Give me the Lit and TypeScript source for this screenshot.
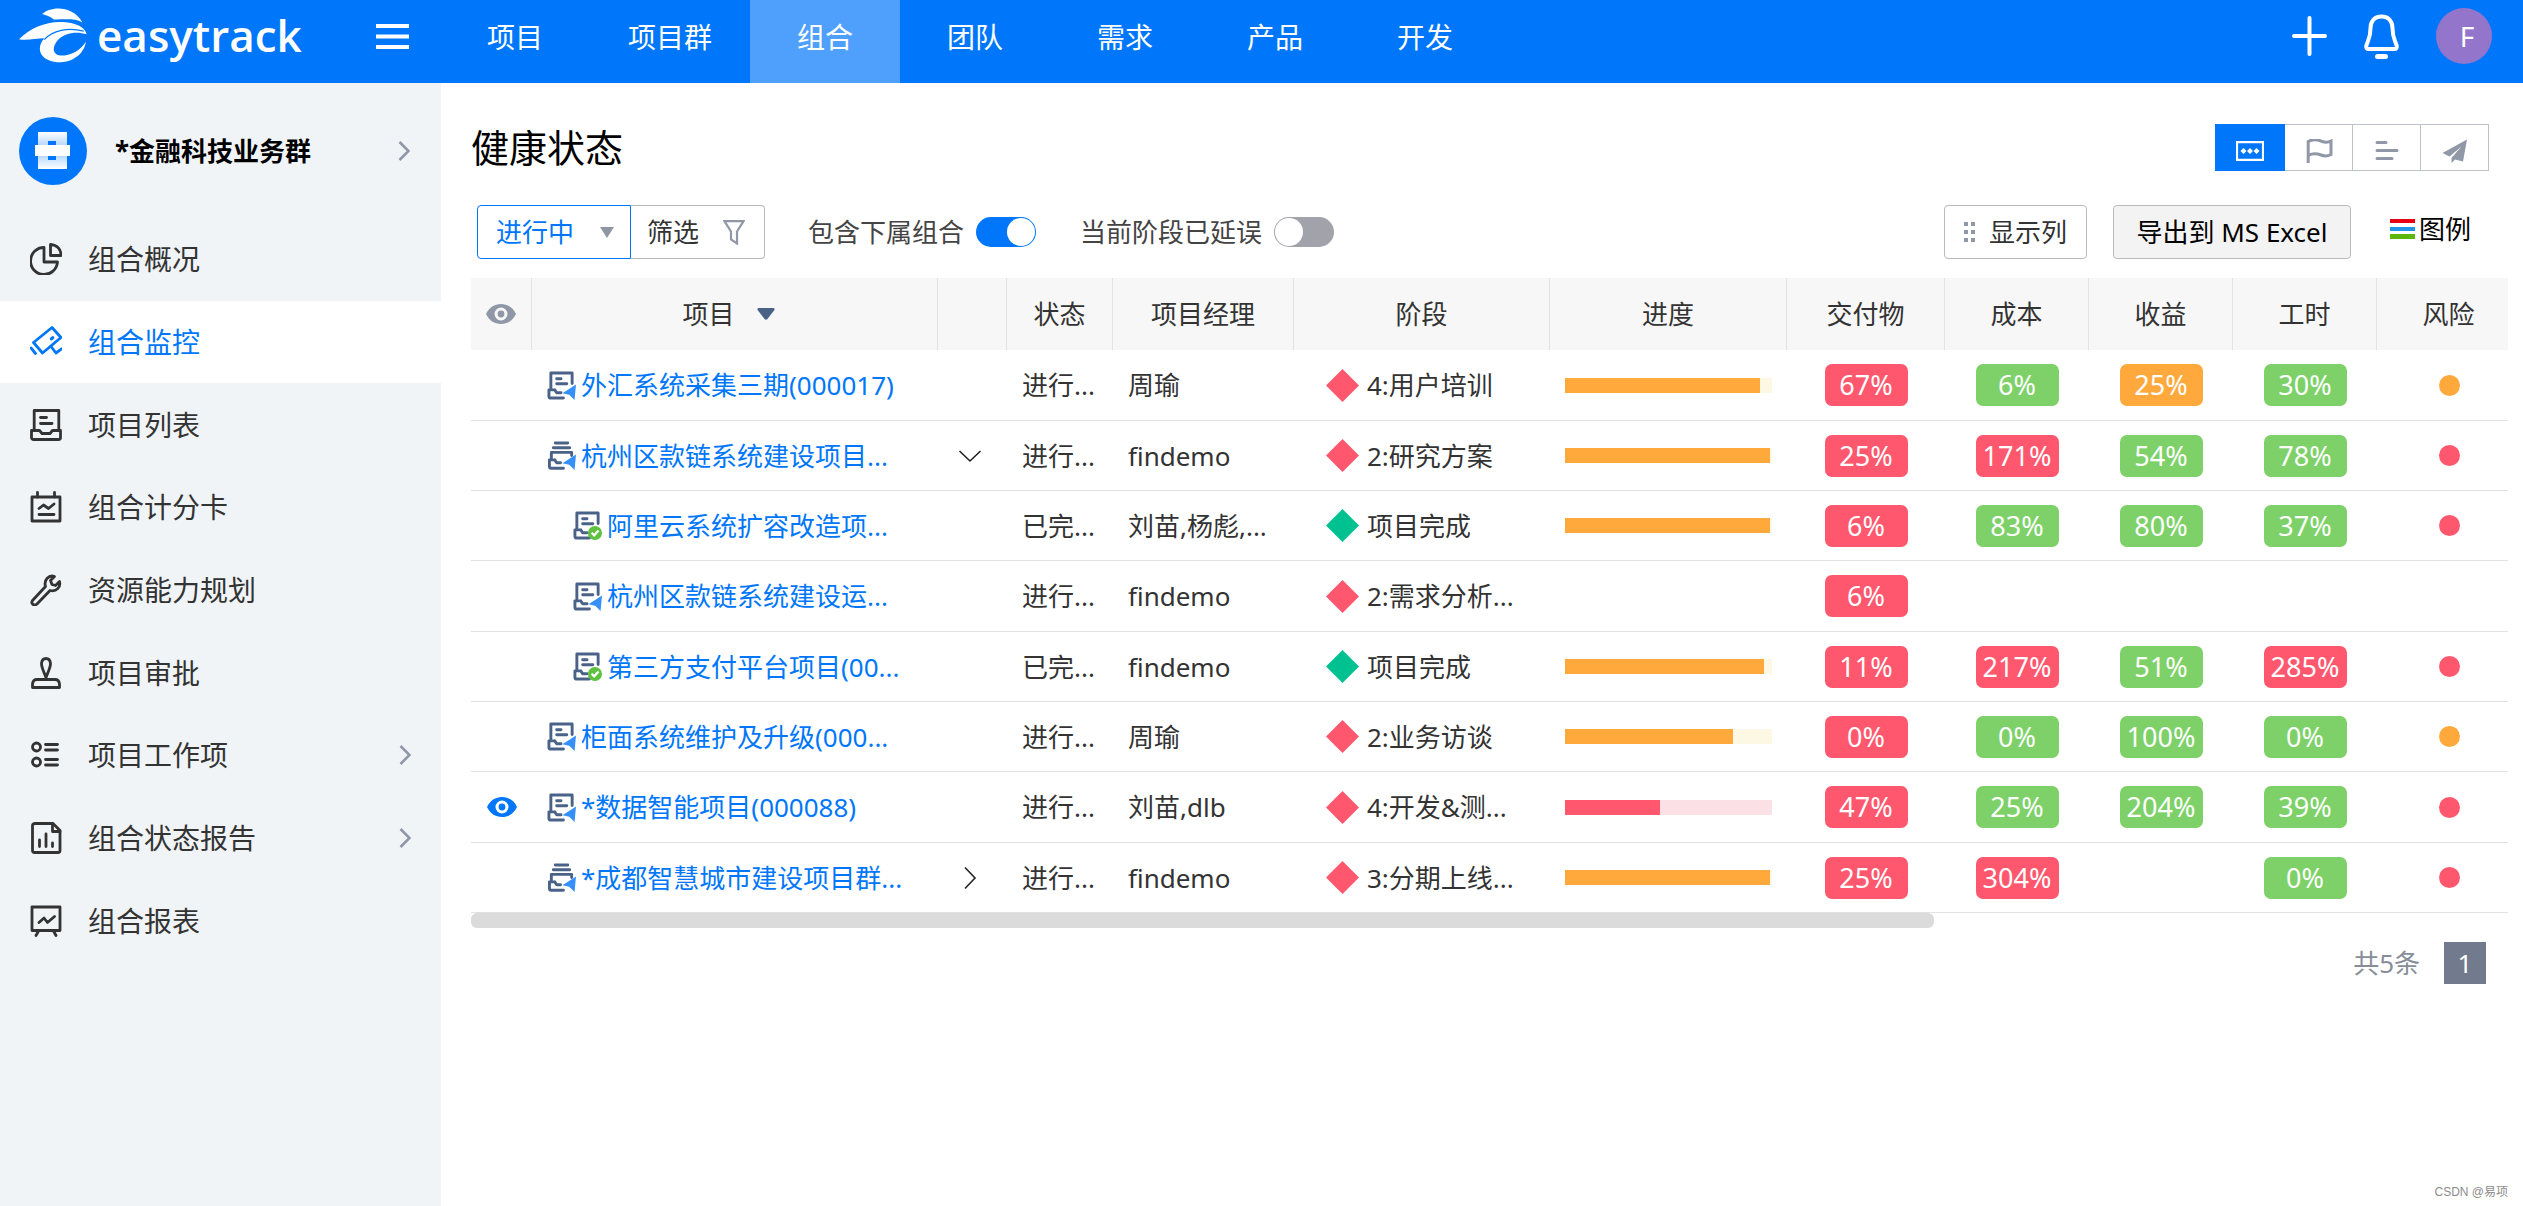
import { LitElement, html, css, svg, nothing } from "lit";
import { customElement, property, state } from "lit/decorators.js";
import { classMap } from "lit/directives/class-map.js";

type Tone = "red" | "green" | "amber";
type Badge = [string, Tone] | null;

interface ProjectRow {
  watched?: boolean;
  icon: "project" | "group";
  done?: boolean;
  child?: boolean;
  name: string;
  expander?: "open" | "closed";
  status: string;
  manager: string;
  stage: string;
  stageDone?: boolean;
  progress?: { value: number; tone: Tone };
  badges: [Badge, Badge, Badge, Badge];
  risk?: Tone;
}

const ROWS: ProjectRow[] = [
  {
    icon: "project", name: "外汇系统采集三期(000017)", status: "进行...", manager: "周瑜",
    stage: "4:用户培训", progress: { value: 94, tone: "amber" },
    badges: [["67%", "red"], ["6%", "green"], ["25%", "amber"], ["30%", "green"]], risk: "amber",
  },
  {
    icon: "group", name: "杭州区款链系统建设项目...", expander: "open", status: "进行...", manager: "findemo",
    stage: "2:研究方案", progress: { value: 99, tone: "amber" },
    badges: [["25%", "red"], ["171%", "red"], ["54%", "green"], ["78%", "green"]], risk: "red",
  },
  {
    icon: "project", done: true, child: true, name: "阿里云系统扩容改造项...", status: "已完...", manager: "刘苗,杨彪,...",
    stage: "项目完成", stageDone: true, progress: { value: 99, tone: "amber" },
    badges: [["6%", "red"], ["83%", "green"], ["80%", "green"], ["37%", "green"]], risk: "red",
  },
  {
    icon: "project", child: true, name: "杭州区款链系统建设运...", status: "进行...", manager: "findemo",
    stage: "2:需求分析...",
    badges: [["6%", "red"], null, null, null],
  },
  {
    icon: "project", done: true, child: true, name: "第三方支付平台项目(00...", status: "已完...", manager: "findemo",
    stage: "项目完成", stageDone: true, progress: { value: 96, tone: "amber" },
    badges: [["11%", "red"], ["217%", "red"], ["51%", "green"], ["285%", "red"]], risk: "red",
  },
  {
    icon: "project", name: "柜面系统维护及升级(000...", status: "进行...", manager: "周瑜",
    stage: "2:业务访谈", progress: { value: 81, tone: "amber" },
    badges: [["0%", "red"], ["0%", "green"], ["100%", "green"], ["0%", "green"]], risk: "amber",
  },
  {
    watched: true, icon: "project", name: "*数据智能项目(000088)", status: "进行...", manager: "刘苗,dlb",
    stage: "4:开发&测...", progress: { value: 46, tone: "red" },
    badges: [["47%", "red"], ["25%", "green"], ["204%", "green"], ["39%", "green"]], risk: "red",
  },
  {
    icon: "group", name: "*成都智慧城市建设项目群...", expander: "closed", status: "进行...", manager: "findemo",
    stage: "3:分期上线...", progress: { value: 99, tone: "amber" },
    badges: [["25%", "red"], ["304%", "red"], null, ["0%", "green"]], risk: "red",
  },
];

/* Sidebar glyphs, drawn on a 32 x 32 grid. */
const SIDE_ICONS = {
  pie: svg`<path d="M14 4.5A13.500 13.500 0 1 0 27.500 19H14Z"/><path d="M20.500 1.500V12.500H31C31 6 27 2 20.500 1.500Z"/>`,
  camera: svg`<path d="M3.500 16.500 22 1.500 31 11.500 12.500 27Z"/><path d="M21.500 12.800l1.200-1" stroke-width="3.400"/><path d="M1 22l4.500 5.500M21 20.500l5 6.500 5.500-4"/>`,
  inbox: svg`<path d="M4.200 20V1.500H28.800V20"/><path d="M1.500 21.500H9.500L12 24.500H20L22.500 21.500H30.500V28.500Q30.500 30.500 28.500 30.500H3.700Q1.500 30.500 1.500 28.500Z"/><path d="M10.500 8.500h6M10.500 14.500h11.500"/>`,
  score: svg`<path d="M2 6H30V30H2Z"/><path d="M7.500 1.500V6M24.500 1.500V6M9 17.500l4.500-3.500 5 3.500 5.500-4.500M9 23.500h15"/>`,
  wrench: svg`<path d="M29.500 7.500C31 13 26.500 18 20 16.500L7 30C4 32.500 0.500 29.500 2.500 26.500L15.500 12.500C13.500 6 19 0.500 24.500 2.500L20.500 6.500 22 10.500 25.500 11.500Z"/>`,
  stamp: svg`<path d="M16 20.500C14.500 16 11.500 11 11.500 6.500Q12 1.500 16 1.500Q20 1.500 20.500 6.500C20.500 11 17.500 16 16 20.500Z"/><path d="M2.500 30.500V27Q3 22.500 7 22.500H25Q29 22.500 29.500 27V30.500Z"/>`,
  list: svg`<circle cx="6.500" cy="8" r="4"/><circle cx="6.500" cy="23" r="4"/><path d="M15.500 5.500h12M15.500 11h12M15.500 20.500h12M15.500 26h12"/>`,
  report: svg`<path d="M5 1.500H23L30 8.500V28.500Q30 30.500 28 30.500H4.500Q2.500 30.500 2.500 28.500V3.500Q2.500 1.500 5 1.500Z"/><path d="M22.500 2V9.500H30M9.500 18v6.500M16 12v12.500M22.500 21v3.500"/>`,
  board: svg`<path d="M2 2H30V25.500H2Z"/><path d="M8.500 26l-2.500 4.500M23.500 26l2.500 4.500M9 17.500l5-4.500 3.500 4.500 7-6"/>`,
};

const MENU: { icon: keyof typeof SIDE_ICONS; label: string; more?: boolean; active?: boolean }[] = [
  { icon: "pie", label: "组合概况" },
  { icon: "camera", label: "组合监控", active: true },
  { icon: "inbox", label: "项目列表" },
  { icon: "score", label: "组合计分卡" },
  { icon: "wrench", label: "资源能力规划" },
  { icon: "stamp", label: "项目审批" },
  { icon: "list", label: "项目工作项", more: true },
  { icon: "report", label: "组合状态报告", more: true },
  { icon: "board", label: "组合报表" },
];

const chevronRight = html`<svg class="chev" viewBox="0 0 12 22" width="12" height="22" aria-hidden="true">
  <path d="M1.500 2 10.500 11 1.500 20" fill="none" stroke="#9196a8" stroke-width="2.600"/></svg>`;

const eye = html`<svg class="eye" viewBox="0 0 30 20" width="30" height="20" aria-hidden="true">
  <path fill="currentColor" fill-rule="evenodd" d="M0 10C3 3.500 8.500 0 15 0S27 3.500 30 10C27 16.500 21.500 20 15 20S3 16.500 0 10ZM15 3.500A6.500 6.500 0 1 0 15 16.500 6.500 6.500 0 1 0 15 3.500Z"/>
  <circle cx="15" cy="10" r="3.400" fill="currentColor"/></svg>`;

const resetStyles = css`
  *, *::before, *::after { box-sizing: border-box; }
  a { color: inherit; text-decoration: none; }
  button, select, input {
    margin: 0; padding: 0; border: 0; background: none;
    font: inherit; color: inherit; appearance: none; cursor: pointer;
  }
  svg { display: block; flex: none; }
`;

@customElement("top-bar")
class TopBar extends LitElement {
  static styles = [resetStyles, css`
    :host { display: flex; height: 83px; background: #0077fa; color: #fff; }
    .brand { display: flex; justify-content: space-between; flex: none; width: 440px; padding: 8px 31px 0 19px; }
    .logo { display: flex; gap: 10px; align-items: flex-start; }
    .word { font-size: 44px; font-weight: 600; line-height: 55px; font-family: "Open Sans", "Noto Sans", sans-serif; }
    .burger { height: 57px; }
    .nav { display: flex; flex: 1; }
    .nav a {
      min-width: 150px; padding: 0 38px 8px; text-align: center; font-size: 28px; line-height: 75px;
    }
    .nav a.active { background: #4f9ffc; }
    .tools { display: flex; align-items: center; padding: 0 31px 11px 0; }
    .plus { margin-right: 37px; }
    .bell { margin-right: 37px; }
    .avatar {
      width: 56px; height: 56px; border-radius: 50%; background: #9475cc;
      font-size: 28px; line-height: 56px; text-align: center; padding-left: 6px;
    }
  `];

  private items = ["项目", "项目群", "组合", "团队", "需求", "产品", "开发"];

  render() {
    return html`
      <div class="brand">
        <a class="logo" href="#home">
          <svg viewBox="57 25 205 165" width="68" height="55" aria-hidden="true">
            <path fill="#fff" d="M127 43C150 20 218 14 248 68C225 54 190 60 162 59C152 50 138 47 127 43Z"/>
            <path fill="#fff" d="M57 119C92 84 140 64 190 67C230 70 256 82 261 104C230 94 195 100 175 120C155 142 158 165 182 168C215 168 242 152 259 126C252 166 215 190 172 188C122 184 106 148 133 116C108 116 80 124 57 119Z"/>
            <path fill="none" stroke="#0077fa" stroke-width="4" d="M133 120C158 92 205 82 252 94"/>
          </svg>
          <span class="word">easytrack</span>
        </a>
        <button class="burger" aria-label="菜单">
          <svg viewBox="0 0 33 25" width="33" height="25"><path d="M0 2H33M0 12.500H33M0 23H33" stroke="#fff" stroke-width="4"/></svg>
        </button>
      </div>
      <nav class="nav">
        ${this.items.map((t) => html`<a href="#nav" class=${classMap({ active: t === "组合" })}>${t}</a>`)}
      </nav>
      <div class="tools">
        <button class="plus" aria-label="新建">
          <svg viewBox="0 0 35 42" width="35" height="42"><path d="M2 21H33M17.500 3V39" stroke="#fff" stroke-width="4" stroke-linecap="round"/></svg>
        </button>
        <button class="bell" aria-label="通知">
          <svg viewBox="0 0 35 46" width="35" height="46" fill="none" stroke="#fff">
            <path d="M17.500 3.500C10 3.500 6.500 9 6.500 15C6.500 25 4 27 2.200 33Q2 36 4.500 36H30.500Q33 36 32.800 33C31 27 28.500 25 28.500 15C28.500 9 25 3.500 17.500 3.500Z" stroke-width="4"/>
            <path d="M13.500 43.500H21.500" stroke-width="5" stroke-linecap="round"/>
          </svg>
        </button>
        <button class="avatar">F</button>
      </div>`;
  }
}

@customElement("side-bar")
class SideBar extends LitElement {
  static styles = [resetStyles, css`
    :host { display: block; background: #f0f4f7; color: #333; }
    .profile { display: flex; align-items: center; height: 135px; padding: 0 31px 0 19px; color: #000; }
    .emblem { margin-right: 28px; }
    .title { flex: 1; font-size: 26px; font-weight: 700; line-height: 36px; }
    .menu { display: grid; grid-auto-rows: 1fr; height: 744px; }
    .item { display: flex; align-items: center; padding: 0 30px; font-size: 28px; line-height: 40px; }
    .item.active { background: #fff; color: #0077fa; }
    .glyph {
      margin-right: 26px; fill: none; stroke: currentColor; stroke-width: 2.800;
      stroke-linecap: round; stroke-linejoin: round;
    }
    .label { flex: 1; }
  `];

  render() {
    return html`
      <a class="profile" href="#portfolio">
        <svg class="emblem" viewBox="0 0 68 68" width="68" height="68" aria-hidden="true">
          <defs>
            <linearGradient id="up" x1="0" y1="0" x2="0" y2="1"><stop offset="0" stop-color="#fff"/><stop offset="1" stop-color="#b3d6fe"/></linearGradient>
            <linearGradient id="down" x1="0" y1="0" x2="0" y2="1"><stop offset="0" stop-color="#b3d6fe"/><stop offset="1" stop-color="#fff"/></linearGradient>
          </defs>
          <circle cx="34" cy="34" r="34" fill="#0077fa"/>
          <path fill="url(#up)" d="M19 15H48V29H37V24H29V29H19Z"/>
          <path fill="url(#down)" d="M19 38H29V43H37V38H48V52H19Z"/>
          <path fill="#fff" d="M16 28H51V39H16Z"/>
        </svg>
        <span class="title">*金融科技业务群</span>
        ${chevronRight}
      </a>
      <nav class="menu">
        ${MENU.map((m) => html`
          <a href="#menu" class=${classMap({ item: true, active: !!m.active })}>
            <svg class="glyph" viewBox="0 0 32 32" width="32" height="32" aria-hidden="true">${SIDE_ICONS[m.icon]}</svg>
            <span class="label">${m.label}</span>
            ${m.more ? chevronRight : nothing}
          </a>`)}
      </nav>`;
  }
}

@customElement("health-table")
class HealthTable extends LitElement {
  static styles = [resetStyles, css`
    :host { display: block; }
    .clip { overflow: hidden; }
    table { width: calc(100% + 13px); table-layout: fixed; border-collapse: separate; border-spacing: 0; }
    .c-eye { width: 61px; }
    .c-exp { width: 69px; }
    .c-status { width: 106px; }
    .c-manager { width: 181px; }
    .c-stage { width: 256px; }
    .c-progress { width: 237px; }
    .c-deliver { width: 158px; }
    .c-metric { width: 144px; }
    th, td { padding: 0 15px; font-size: 26px; line-height: 36px; white-space: nowrap; color: #333; }
    th { height: 72px; background: #f7f7f7; border-right: 1px solid #e2e2e2; font-weight: 400; text-align: center; }
    td { height: 70px; border-bottom: 1px solid #e2e2e2; text-align: left; }
    tr:nth-child(3n + 1) td { height: 71px; }
    .center { text-align: center; }
    .eye { margin: 0 auto; }
    th .eye { color: #9097a7; }
    td .eye { color: #0077fa; }
    .eye-cell { padding: 0; }
    .sort { display: inline-flex; align-items: center; gap: 22px; padding-right: 12px; }
    .name { display: flex; align-items: center; gap: 5px; color: #0077fa; }
    .name.child { padding-left: 26px; }
    .expand { display: block; margin: 0 auto; padding-right: 5px; }
    .stage { display: flex; align-items: center; gap: 8px; padding-left: 17px; }
    .track { height: 15px; width: 207px; max-width: 100%; }
    .track.amber { background: #fcf8e4; }
    .track.red { background: #fbe0e5; }
    .fill { height: 100%; }
    .red .fill, .dot.red, .badge.red { background: #ff586e; }
    .amber .fill, .dot.amber, .badge.amber { background: #ffa93d; }
    .green .fill, .dot.green, .badge.green { background: #7dd168; }
    .badge { display: inline-block; width: 83px; height: 42px; border-radius: 7px; color: #fff; font-size: 27px; line-height: 42px; text-align: center; vertical-align: middle; }
    .dot { display: block; width: 21px; height: 21px; margin: 0 auto; border-radius: 50%; }
    .metric { padding: 0; text-align: center; }
    .thumb { width: 71.8%; height: 15px; border-radius: 6px; background: #dbdbdb; }
  `];

  private rowIcon(r: ProjectRow) {
    return html`<svg viewBox="0 0 30 30" width="29" height="29" aria-hidden="true">
      <g fill="none" stroke="#4a6288" stroke-width="3" stroke-linecap="round" stroke-linejoin="round">
        ${r.icon === "project"
          ? svg`<path d="M4 18V2H26V13M10 8H14.500M10 13.200H20.500"/>
                <path d="M8 19.500H2V26Q2 28 4 28H17M8 19.500L10 22.500H14.500"/>`
          : svg`<path d="M8.500 2H21.500M6.500 7H23.500M4.500 18V11.800H25.500V15"/>
                <path d="M8 19.500H2.500V26Q2.500 28.200 4.500 28.200H17M8 19.500L10 22.500H14"/>`}
      </g>
      ${r.done
        ? svg`<circle cx="22.700" cy="22.700" r="7.300" fill="#5ec23f"/><path d="M19.200 22.500l2.700 2.700 4.500-5" fill="none" stroke="#fff" stroke-width="2.400"/>`
        : svg`<path d="M30 14 16 23 23 24.500 28.500 30Z" fill="#3590fb"/>`}
    </svg>`;
  }

  private badge(b: Badge) {
    return html`<td class="metric">${b ? html`<span class="badge ${b[1]}">${b[0]}</span>` : nothing}</td>`;
  }

  render() {
    return html`
      <div class="clip">
        <table>
          <colgroup>
            <col class="c-eye"><col><col class="c-exp"><col class="c-status"><col class="c-manager">
            <col class="c-stage"><col class="c-progress"><col class="c-deliver">
            <col class="c-metric"><col class="c-metric"><col class="c-metric"><col class="c-metric">
          </colgroup>
          <thead>
            <tr>
              <th class="eye-cell" aria-label="关注">${eye}</th>
              <th><button class="sort">项目
                <svg viewBox="0 0 18 12" width="18" height="12" aria-hidden="true"><path d="M1.500 0H16.500Q18.500 0.500 17 2.500L10.500 11Q9 12.500 7.500 11L1 2.500Q-.5 0.500 1.500 0Z" fill="#4a6288"/></svg>
              </button></th>
              <th aria-label="展开"></th>
              ${["状态", "项目经理", "阶段", "进度", "交付物", "成本", "收益", "工时", "风险"].map((t) => html`<th>${t}</th>`)}
            </tr>
          </thead>
          <tbody>
            ${ROWS.map((r) => html`
              <tr>
                <td class="eye-cell">${r.watched ? eye : nothing}</td>
                <td><a class=${classMap({ name: true, child: !!r.child })} href="#project">${this.rowIcon(r)}<span>${r.name}</span></a></td>
                <td class="metric">${r.expander ? html`
                  <button class="expand" aria-label=${r.expander === "open" ? "收起" : "展开"}>
                    <svg viewBox="0 0 24 24" width="24" height="24"><path fill="none" stroke="#222" stroke-width="1.600"
                      d=${r.expander === "open" ? "M1.500 7 12 17 22.500 7" : "M7 1.500 17 12 7 22.500"}/></svg>
                  </button>` : nothing}</td>
                <td>${r.status}</td>
                <td>${r.manager}</td>
                <td><div class="stage">
                  <svg viewBox="0 0 33 33" width="33" height="33" aria-hidden="true"><path d="M16.500 0 33 16.500 16.500 33 0 16.500Z" fill=${r.stageDone ? "#00c190" : "#ff586e"}/></svg>
                  <span>${r.stage}</span></div></td>
                <td>${r.progress ? html`
                  <div class="track ${r.progress.tone}" role="progressbar" aria-valuenow=${r.progress.value}>
                    <div class="fill" style="width:${r.progress.value}%"></div>
                  </div>` : nothing}</td>
                ${r.badges.map((b) => this.badge(b))}
                <td class="metric">${r.risk ? html`<span class="dot ${r.risk}"></span>` : nothing}</td>
              </tr>`)}
          </tbody>
        </table>
      </div>
      <div class="thumb"></div>`;
  }
}

@customElement("switch-field")
class SwitchField extends LitElement {
  static styles = [resetStyles, css`
    label { display: flex; align-items: center; gap: 12px; color: #444; cursor: pointer; }
    input { width: 60px; height: 30px; padding: 1px; border-radius: 15px; background: #a2a2ab; display: flex; }
    input::before { content: ""; width: 28px; height: 28px; border-radius: 50%; background: #fff; }
    input:checked { background: #0077fa; justify-content: flex-end; }
  `];
  @property() label = "";
  @property({ type: Boolean }) checked = false;

  render() {
    return html`<label><span>${this.label}</span><input type="checkbox" role="switch" .checked=${this.checked}></label>`;
  }
}

@customElement("app-root")
class AppRoot extends LitElement {
  static styles = [resetStyles, css`
    :host {
      display: grid; grid-template: auto 1fr / 441px minmax(0, 1fr);
      min-height: 100vh; background: #fff; color: #333;
      font-family: "Noto Sans", "Noto Sans CJK SC", sans-serif; font-size: 26px; line-height: 36px;
    }
    top-bar { grid-column: 1 / -1; }
    .main { display: flex; flex-direction: column; padding: 41px 15px 4px 30px; }
    .head { display: flex; align-items: center; justify-content: space-between; padding-right: 19px; margin-bottom: 34px; }
    h1 { margin: 0; font-size: 38px; font-weight: 400; line-height: 47px; color: #000; }
    .views { display: flex; }
    .views button {
      display: flex; align-items: center; justify-content: center; width: 68px; height: 47px; padding-top: 7px;
      border: 1px solid #bfc2cb; border-left: 0; color: #9097a7;
    }
    .views button.on { width: 70px; border-color: #0077fa; background: #0077fa; color: #fff; }
    .bar { display: flex; align-items: center; padding: 0 37px 0 6px; margin-bottom: 19px; }
    .picker { display: grid; align-items: center; width: 154px; }
    .picker select, .picker svg { grid-area: 1 / 1; }
    .picker svg { justify-self: end; margin-right: 17px; pointer-events: none; }
    .picker select { height: 54px; padding-left: 18px; border: 1px solid #0077fa; border-radius: 4px 0 0 4px; color: #0077fa; }
    .filter {
      display: flex; align-items: center; gap: 24px; height: 54px; padding: 0 19px 0 16px; margin-right: 43px;
      border: 1px solid #b9b9b9; border-left: 0; border-radius: 0 4px 4px 0;
    }
    .first { margin-right: 44px; }
    .columns, .export { height: 54px; border: 1px solid #b9b9b9; border-radius: 4px; }
    .columns { display: flex; align-items: center; gap: 14px; margin-left: auto; padding: 0 19px; }
    .export { width: 238px; margin: 0 39px 0 26px; background: #f3f3f3; color: #000; }
    .legend { display: flex; align-items: center; gap: 4px; padding-bottom: 6px; color: #000; }
    .pager { display: flex; align-items: center; justify-content: flex-end; gap: 24px; margin: 14px 22px 0 0; color: #888e99; }
    .pager button { width: 42px; height: 42px; background: #727b8d; color: #fff; }
    .mark { margin-top: auto; text-align: right; font-size: 12px; line-height: 20px; color: #8c8c8c; font-family: "Liberation Sans", "Noto Sans CJK SC", sans-serif; }
  `];

  @state() private view = 0;

  private viewIcons = [
    svg`<path d="M1 1.200H27V18.800H1Z" fill="none" stroke="currentColor" stroke-width="2.200"/><path d="M7.500 7l3 3-3 3-3-3ZM14 7l3 3-3 3-3-3ZM20.500 7l3 3-3 3-3-3Z" fill="currentColor"/>`,
    svg`<path d="M3.200 22V.5C8-2 13-1.500 17 .5Q22 2 26 0V13.500Q21 16 16 14Q9 11.500 3.200 14.500" fill="none" stroke="currentColor" stroke-width="3"/>`,
    svg`<path d="M4 1.500H13M4 9.500H24M4 17.500H19" fill="none" stroke="currentColor" stroke-width="3" stroke-linecap="round"/>`,
    svg`<path d="M26-1.500 1.500 12 8.500 15.500 20.500 5.500 10.500 17 10.500 22 14 18.500 22 20.500Z" fill="currentColor"/>`,
  ];
  private viewNames = ["看板", "里程碑", "甘特", "发送"];

  render() {
    return html`
      <top-bar></top-bar>
      <side-bar></side-bar>
      <main class="main">
        <div class="head">
          <h1>健康状态</h1>
          <div class="views">
            ${this.viewIcons.map((icon, i) => html`
              <button class=${classMap({ on: i === this.view })} aria-label=${this.viewNames[i]} @click=${() => (this.view = i)}>
                <svg viewBox="0 -2 28 25" width="28" height="25">${icon}</svg>
              </button>`)}
          </div>
        </div>
        <div class="bar">
          <div class="picker">
            <select aria-label="项目状态"><option>进行中</option></select>
            <svg viewBox="0 0 14 11" width="14" height="11" aria-hidden="true"><path d="M0 0H14L7 11Z" fill="#8f96a3"/></svg>
          </div>
          <button class="filter">筛选
            <svg viewBox="0 0 22 25" width="22" height="25" aria-hidden="true"><path d="M1.500 1.200H20.500L14 11.500V23.500L8 19.500V11.500Z" fill="none" stroke="#9097a7" stroke-width="2.200"/></svg>
          </button>
          <switch-field class="first" label="包含下属组合" checked></switch-field>
          <switch-field label="当前阶段已延误"></switch-field>
          <button class="columns">
            <svg viewBox="0 0 11 20" width="11" height="20" aria-hidden="true"><path d="M0 0H4V4H0ZM7 0H11V4H7ZM0 8H4V12H0ZM7 8H11V12H7ZM0 16H4V20H0ZM7 16H11V20H7Z" fill="#9097a7"/></svg>
            显示列
          </button>
          <button class="export">导出到 MS Excel</button>
          <button class="legend">
            <svg viewBox="0 0 25 20" width="25" height="20" aria-hidden="true">
              <rect width="25" height="4" fill="#e60012"/><rect y="8" width="25" height="4" fill="#2196e8"/><rect y="15" width="25" height="5" fill="#5cb80c"/>
            </svg>图例
          </button>
        </div>
        <health-table></health-table>
        <div class="pager"><span>共5条</span><button>1</button></div>
        <div class="mark">CSDN @易项</div>
      </main>`;
  }
}
